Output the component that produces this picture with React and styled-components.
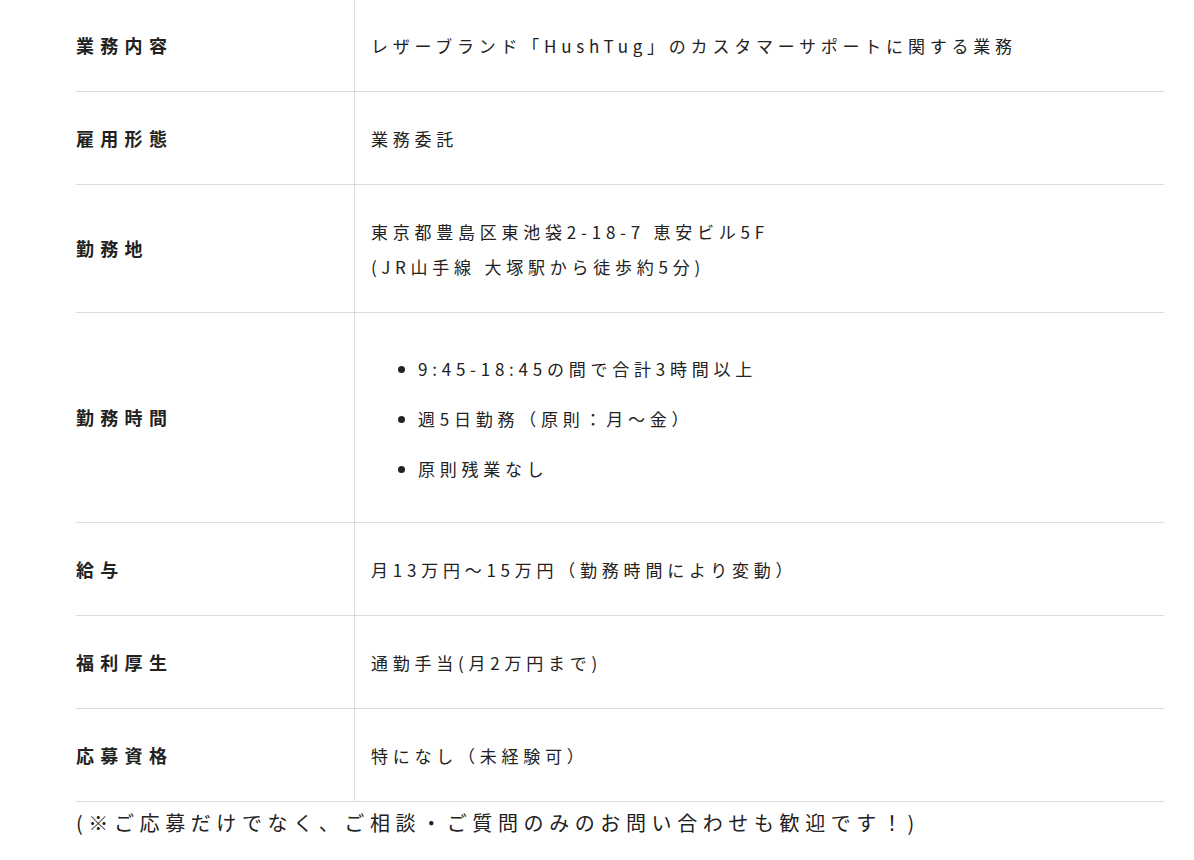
import React from 'react'
import styled, { createGlobalStyle } from 'styled-components'

const rows = [
  { label: '業務内容', lines: ['レザーブランド「HushTug」のカスタマーサポートに関する業務'] },
  { label: '雇用形態', lines: ['業務委託'] },
  { label: '勤務地', lines: ['東京都豊島区東池袋2-18-7 恵安ビル5F', '(JR山手線 大塚駅から徒歩約5分)'] },
  { label: '勤務時間', list: ['9:45-18:45の間で合計3時間以上', '週5日勤務（原則：月～金）', '原則残業なし'] },
  { label: '給与', lines: ['月13万円～15万円（勤務時間により変動）'] },
  { label: '福利厚生', lines: ['通勤手当(月2万円まで)'] },
  { label: '応募資格', lines: ['特になし（未経験可）'] },
]

const App = () => {
  return (
    <>
      <GlobalStyle />
      <Page>
        <Table>
          {rows.map(row => (
            <Row key={row.label}>
              <Label>{row.label}</Label>
              <Value>
                {row.lines && row.lines.map(line => <Line key={line}>{line}</Line>)}
                {row.list && (
                  <List>
                    {row.list.map(item => <Item key={item}>{item}</Item>)}
                  </List>
                )}
              </Value>
            </Row>
          ))}
        </Table>
        <Note>(※ご応募だけでなく、ご相談・ご質問のみのお問い合わせも歓迎です！)</Note>
      </Page>
    </>
  )
}

const GlobalStyle = createGlobalStyle`
  body {
    margin: 0;
    background: #fff;
    color: #222;
    font-family: "Noto Sans CJK JP", "Noto Sans", sans-serif;
  }
`

const Page = styled.div`
  width: 1088px;
  padding: 0 30px 0 76px;
  margin-top: -1px;
`

const Table = styled.div`
  display: flex;
  flex-direction: column;
`

const Row = styled.div`
  display: grid;
  grid-template-columns: 279px 1fr;
  border-bottom: 1px solid #dcdcdc;
`

const Label = styled.div`
  display: flex;
  align-items: center;
  border-right: 1px solid #dcdcdc;
  font-size: 18px;
  font-weight: 700;
  letter-spacing: 0.35em;
  line-height: 35px;
`

const Value = styled.div`
  padding: 29px 0 28px 16px;
  font-size: 17px;
  letter-spacing: 0.28em;
  line-height: 35px;
`

const Line = styled.div`
  white-space: nowrap;
`

const List = styled.ul`
  margin: 9px 0 8px;
  padding-left: 47px;
  list-style: disc;
`

const Item = styled.li`
  & + & {
    margin-top: 15px;
  }
`

const Note = styled.p`
  margin: 0;
  font-size: 20px;
  letter-spacing: 0.28em;
  line-height: 42px;
  white-space: nowrap;
`

export default App
